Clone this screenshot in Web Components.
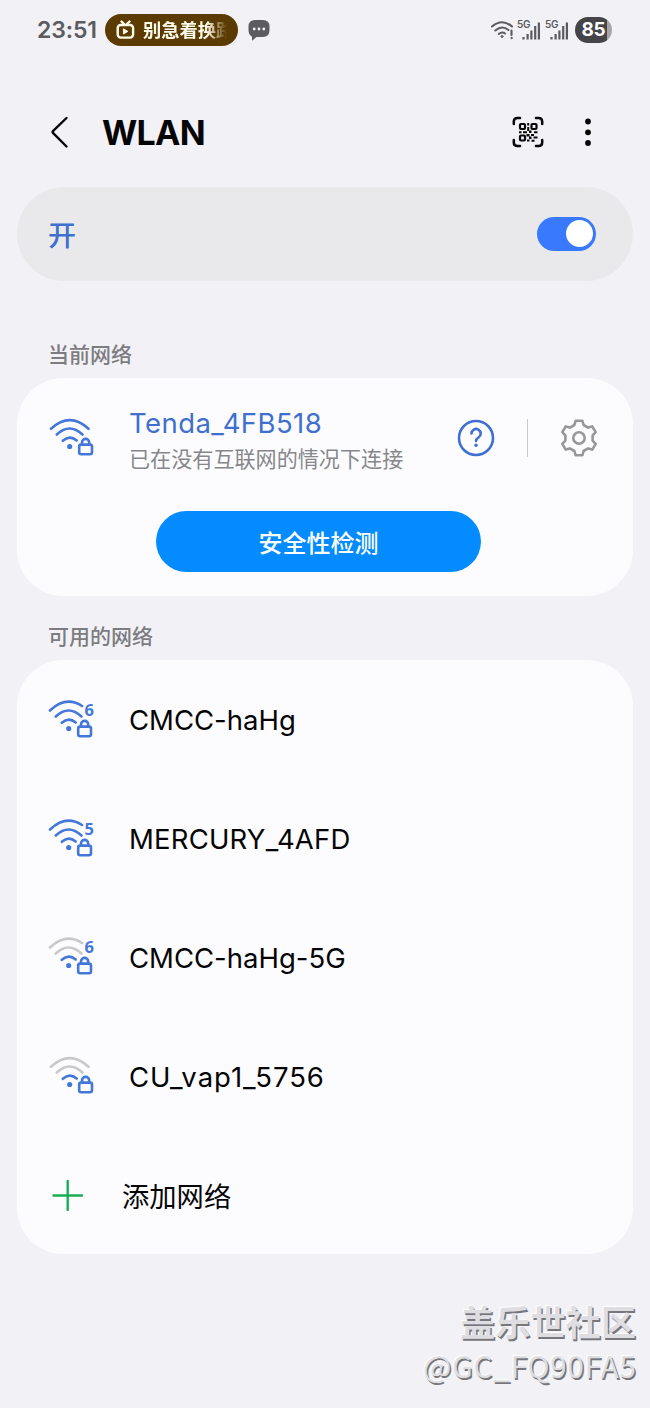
<!DOCTYPE html>
<html lang="zh-CN">
<head>
<meta charset="utf-8">
<title>WLAN</title>
<style>
html,body{margin:0;background:#f1f1f6}
body{font-family:Inter,"Noto Sans CJK SC",sans-serif;color:#050505}
</style>
</head>
<body>
<wlan-screen></wlan-screen>
<script>
const define = (name, html) => customElements.define(name, class extends HTMLElement {
  connectedCallback() {
    if (this.shadowRoot) return;
    const root = this.attachShadow({mode: 'open'});
    root.innerHTML = typeof html === 'function' ? html(this) : html;
  }
});

define('signal-bars', `<style>
:host{display:block;position:relative;width:24px;height:20px;color:#5c5c60}
span{position:absolute;left:-1px;top:0;font:600 10px/9px Inter,sans-serif;letter-spacing:-.2px}
svg{display:block}</style>
<span>5G</span>
<svg width="24" height="20" fill="currentColor"><rect x="4.400" y="17" width="2.200" height="2.500"/><rect x="8.500" y="14" width="2.200" height="5.500"/><rect x="12.300" y="10.500" width="2.200" height="9"/><rect x="16.100" y="6" width="2.200" height="13.500"/><rect x="19.800" y="2.500" width="2.200" height="17"/></svg>`);

define('status-bar', `<style>
:host{display:flex;align-items:center;height:60px;padding:0 38px 0 37px;box-sizing:border-box;color:#5c5c60}
.time{width:68px;font-size:23px;font-weight:600;line-height:60px;white-space:nowrap;letter-spacing:-.1px}
.pill{display:flex;align-items:center;width:133px;height:32px;border-radius:16px;background:#5b3b02;color:#fffbea;box-sizing:border-box;padding-left:11px}
.pill svg{flex:none;margin-right:8px}
.pill span{flex:none;font-size:18.300px;line-height:32px;white-space:nowrap;font-weight:600;-webkit-mask-image:linear-gradient(90deg,#000 64px,transparent 84px);mask-image:linear-gradient(90deg,#000 64px,transparent 84px)}
.chat{margin-left:9px}
.right{margin-left:auto;display:flex;align-items:center}
.bat{width:37px;height:26px;border-radius:13px;background:linear-gradient(90deg,#454549 32px,#a5a5aa 32px);color:#fff;font-weight:700;font-size:19px;line-height:26px;text-align:center;letter-spacing:-.3px;margin-left:5px}
</style>
<div class="time">23:51</div>
<div class="pill"><svg width="19" height="20" viewBox="0 0 19 20" fill="none" stroke="#fffbea" stroke-width="2.400" stroke-linecap="round" stroke-linejoin="round"><rect x="1.700" y="5" width="15.400" height="12.600" rx="3"/><path d="M5.500 1.500 8 4M13.500 1.500 11 4"/><path d="m7.800 9 4 2.400-4 2.400z" fill="#fffbea" stroke-width="1"/></svg><span>别急着换路</span></div>
<svg class="chat" width="24" height="24" viewBox="0 0 24 24"><path d="M8 2h8q6.500 0 6.500 6.500v3.500q0 7-6.500 7H9.500L5 22.800V18.500Q1.500 17 1.500 12V8.500Q1.500 2 8 2z" fill="#5c5c60"/><g fill="#f1f1f6"><circle cx="7.200" cy="11" r="1.400"/><circle cx="12" cy="11" r="1.400"/><circle cx="16.800" cy="11" r="1.400"/></g></svg>
<div class="right">
<svg width="27" height="20" viewBox="0 0 27 20" fill="none" stroke="#5c5c60" stroke-width="2.100" stroke-linecap="round"><path d="M1 6.500Q11 -2 21 6.500M4.300 10.500Q11 4.800 17.500 10M7.800 14Q11 11.200 14 13.500M20.500 10.500V15"/><circle cx="11" cy="16.500" r="1" fill="#5c5c60" stroke-width="1"/><circle cx="20.500" cy="18" r=".7" fill="#5c5c60" stroke-width="1"/></svg>
<signal-bars></signal-bars><signal-bars style="margin-left:4px"></signal-bars><div class="bat">85</div></div>`);

define('page-header', `<style>
:host{display:flex;align-items:center;height:60px;padding:0 55px 0 48px}
h1{margin:2px 0 0 28px;font-size:34px;line-height:60px;font-weight:700;color:#050505;letter-spacing:-.7px}
.qr{margin-left:auto}.more{margin-left:37px}
</style>
<svg width="26" height="36" viewBox="0 0 26 36" fill="none" stroke="#080808" stroke-width="2.400" stroke-linecap="round" stroke-linejoin="round"><path d="M18.500 4 5.200 16.800Q4 18 5.200 19.200L18.500 32.500"/></svg>
<h1><slot></slot></h1>
<svg class="qr" width="32" height="32" viewBox="0 0 32 32" fill="none" stroke="#080808" stroke-width="2.500" stroke-linecap="round"><path d="M1.800 8V5.500Q1.800 2 5.500 2H8M24 2h2.500Q30.200 2 30.200 5.500V8M30.200 24v2.500q0 3.500-3.700 3.500H24M8 30H5.500Q1.800 30 1.800 26.500V24"/><g stroke-width="2.200"><rect x="8" y="8" width="5" height="5" rx="1"/><rect x="19.500" y="8" width="5" height="5" rx="1"/><rect x="8" y="19.500" width="5" height="5" rx="1"/></g><path fill="#080808" stroke="none" d="M15.200 7h2v2.500h-2zM15.200 11h2v4h-2zM7 15.200h2.500v2H7zM11 15.200h4v2h-4zM17 14.500h2.500v2.500H17zM22 15.200h3.500v2H22zM14.500 18h3v2.500h-3zM19 18h3v2h-3zM17 20.500h2.500v2.500H17zM21.500 20.500h4v2h-4zM15 23.500h2.500v2H15zM19.500 23.800h3v2h-3z"/></svg>
<svg class="more" width="14" height="32" viewBox="0 0 14 32" fill="#080808"><circle cx="7" cy="5.500" r="2.900"/><circle cx="7" cy="16.300" r="2.900"/><circle cx="7" cy="27" r="2.900"/></svg>`);

define('toggle-switch', `<style>
:host{display:flex;justify-content:flex-end;align-items:center;width:59px;height:34px;border-radius:17px;background:#3979fd;padding:0 3px;box-sizing:border-box}
i{width:27px;height:27px;border-radius:50%;background:#fff}</style><i></i>`);

define('master-switch', `<style>
:host{display:flex;align-items:center;justify-content:space-between;height:94px;border-radius:47px;background:#e9e9ec;padding:0 37px 0 31px;box-sizing:border-box}
span{font-size:28px;line-height:40px;font-weight:500;color:#4070ce;margin-top:4px}</style>
<span><slot></slot></span><toggle-switch></toggle-switch>`);

define('section-label', `<style>
:host{display:flex;align-items:center;height:30px;padding-left:31px;font-size:21px;line-height:30px;font-weight:500;color:#7c7c81}</style><slot></slot>`);

define('round-card', `<style>
:host{display:block;border-radius:46px;background:#fcfcff;overflow:hidden}</style><slot></slot>`);

define('wifi-icon', el => {
  const band = el.getAttribute('band');
  const far = el.hasAttribute('weak') ? '#c9c9cb' : '#4478d8';
  const outer = band ? 'M3 12.500Q19 -2.500 35 8' : 'M3 12.800Q21.700 -4.500 40.500 12.800';
  return `<style>
:host{display:block;position:relative;width:50px;height:43px;margin-left:${band ? 0 : 1}px}
svg{display:block}
b{position:absolute;left:37.500px;top:4px;font:700 16.500px/15px "Noto Sans",sans-serif;color:#4478d8}</style>
<svg width="50" height="43" viewBox="0 0 50 43" fill="none" stroke="#4478d8" stroke-width="2.600" stroke-linecap="round"><path stroke="${far}" d="${outer}"/><path stroke="${far}" d="M8.800 18.500Q21.500 6.500 34.500 18.500"/><path d="M14.800 24.800Q21.700 18.500 28.700 24.500"/><circle cx="21.700" cy="30.500" r="1.600" fill="#4478d8" stroke-width="2"/><rect x="31.200" y="28.600" width="12.800" height="9.600" rx="2"/><path d="M34 28.300V26.500a3.600 3.600 0 0 1 7.200 0V28.300"/></svg>${band ? `<b>${band}</b>` : ''}`;
});

define('network-row', `<style>
:host{display:flex;align-items:center;height:118.800px;padding-left:30px;box-sizing:border-box}
.i{width:82px}
.t{font-size:27.500px;line-height:40px;color:#050505;white-space:nowrap;margin-top:2px}</style>
<div class="i"><slot name="icon"></slot></div><div class="t"><slot></slot></div>`);

define('add-row', `<style>
:host{display:flex;align-items:center;height:118.800px;padding-left:35px;box-sizing:border-box}
svg{margin-right:38px}
span{font-size:27.300px;line-height:40px;color:#050505;margin-top:7px}</style>
<svg width="32" height="32" stroke="#18ae50" stroke-width="2.400" stroke-linecap="round"><path d="M1.500 16.500H30M15.700 2V31"/></svg><span><slot></slot></span>`);

define('current-network', `<style>
:host{display:block;height:218.500px}
.row{display:flex;align-items:center;height:120px;padding:0 35px 0 30px}
.i{width:82px}
.n{font-size:27.500px;line-height:36px;color:#4070ce;white-space:nowrap;letter-spacing:.42px}
.s{font-size:21.100px;line-height:30px;color:#87878b;white-space:nowrap;margin-top:4px}
.txt{width:328px;margin-top:5px}
.line{width:1px;height:38px;background:#cbcbcf;margin:0 32px}
button{display:block;width:325px;height:61px;margin:13.700px 0 0 139px;border:0;border-radius:31px;background:#038bff;color:#fff;font:500 24px/61px "Noto Sans CJK SC",sans-serif;padding:0}
svg{flex:none}</style>
<div class="row"><div class="i"><wifi-icon></wifi-icon></div>
<div class="txt"><div class="n"><slot></slot></div><div class="s"><slot name="status"></slot></div></div>
<svg width="38" height="38" viewBox="0 0 38 38" fill="none" stroke="#4070d0" stroke-width="2.600" stroke-linecap="round"><circle cx="19" cy="19" r="17"/><path d="M14.500 14.500a4.600 4.600 0 1 1 7 4Q19 20 19 22"/><circle cx="19" cy="26.300" r="1" fill="#4070d0" stroke-width="1.600"/></svg>
<div class="line"></div>
<svg width="38" height="38" viewBox="0 0 38 38" fill="none" stroke="#97979a" stroke-width="2.600" stroke-linejoin="round"><path d="M15.600 1.800 22.400 1.800 23.600 6 28.100 8.600 32.300 7.400 35.700 13.200 32.600 16.400V21.600L35.700 24.800 32.300 30.600 28.100 29.400 23.600 32 22.400 36.200H15.600L14.400 32 9.900 29.400 5.700 30.600 2.300 24.800 5.400 21.600V16.400L2.300 13.200 5.700 7.400 9.900 8.600 14.400 6z"/><circle cx="19" cy="19" r="5.700"/></svg></div>
<button><slot name="action"></slot></button>`);

define('corner-mark', `<style>
:host{display:block;position:absolute;right:14px;top:1298px;text-align:right;color:#dedee2;text-shadow:1.500px 1.500px 0 #77777b,-1px -1px 0 #fff;white-space:nowrap}
.a{font:700 35.200px/46px "Noto Sans CJK SC",sans-serif}
.b{font:400 30px/42px "Noto Sans CJK SC",sans-serif;letter-spacing:.6px;margin-right:-.6px}</style>
<div class="a">盖乐世社区</div><div class="b">@GC_FQ90FA5</div>`);

define('wlan-screen', `<style>
:host{display:block;position:relative;width:650px;height:1408px;overflow:hidden;background:#f1f1f6}
page-header{margin-top:42px;height:60px}
main{padding:24.500px 17px 0}
.l1{margin-top:59.500px}.c1{margin-top:7.500px}.l2{margin-top:25.500px}.c2{margin-top:8.500px}
</style>
<status-bar></status-bar>
<page-header>WLAN</page-header>
<main>
<master-switch>开</master-switch>
<section-label class="l1">当前网络</section-label>
<round-card class="c1"><current-network>Tenda_4FB518<span slot="status">已在没有互联网的情况下连接</span><span slot="action">安全性检测</span></current-network></round-card>
<section-label class="l2">可用的网络</section-label>
<round-card class="c2">
<network-row><wifi-icon slot="icon" band="6"></wifi-icon>CMCC-haHg</network-row>
<network-row style="letter-spacing:.2px"><wifi-icon slot="icon" band="5"></wifi-icon>MERCURY_4AFD</network-row>
<network-row><wifi-icon slot="icon" band="6" weak></wifi-icon>CMCC-haHg-5G</network-row>
<network-row style="letter-spacing:.95px"><wifi-icon slot="icon" weak></wifi-icon>CU_vap1_5756</network-row>
<add-row>添加网络</add-row>
</round-card>
</main>
<corner-mark></corner-mark>`);
</script>
</body>
</html>
